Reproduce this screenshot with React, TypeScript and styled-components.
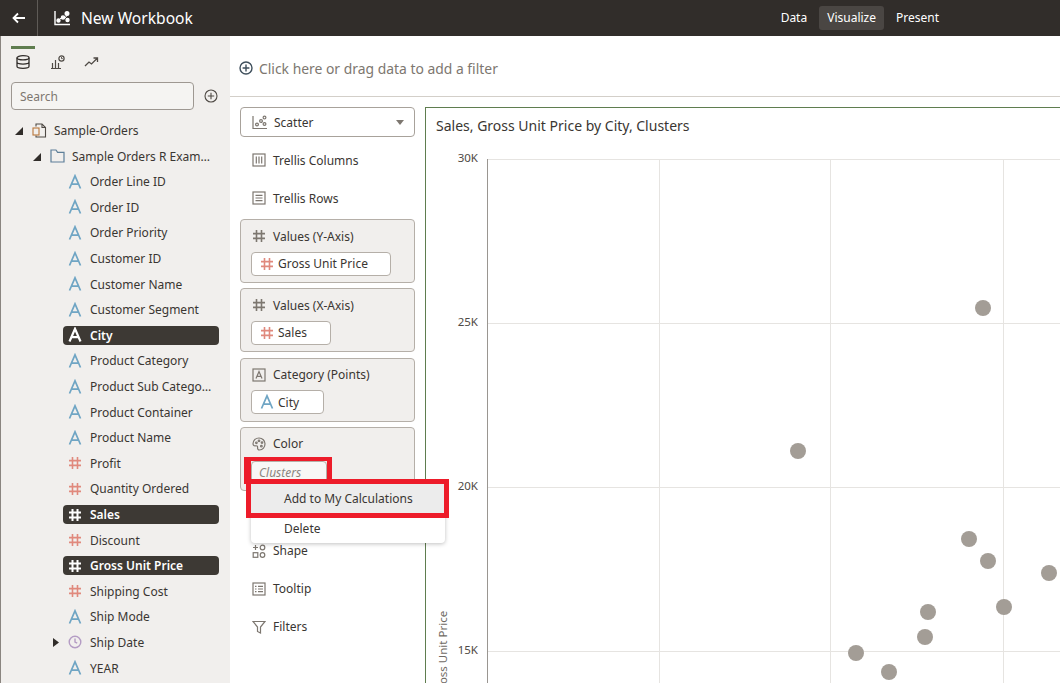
import { ReactNode } from 'react';
import styled, { createGlobalStyle } from 'styled-components';

const GlobalStyle = createGlobalStyle`
  html, body {
    margin: 0;
    padding: 0;
    height: 100%;
    overflow: hidden;
    background: #fff;
  }
  * { box-sizing: border-box; }
  body {
    font-family: 'Noto Sans', 'Open Sans', sans-serif;
    font-size: 12px;
    color: #3a3632;
  }
`;

const BLUE = '#6fa5c4';
const RED = '#e0897d';
const GREY = '#7d7770';

function LetterIcon({ color = BLUE, bold = false }: { color?: string; bold?: boolean }) {
  return (
    <svg width="14" height="16" viewBox="0 0 14 16" fill="none" stroke={color} strokeWidth={bold ? 2.2 : 1.7}>
      <path d="M1.5 14.5 7 1.8l5.5 12.7M3.4 10.2h7.2" />
    </svg>
  );
}

function HashIcon({ color = RED, bold = false }: { color?: string; bold?: boolean }) {
  return (
    <svg width="14" height="14" viewBox="0 0 14 14" fill="none" stroke={color} strokeWidth={bold ? 2 : 1.6}>
      <path d="M4.5 1v12M9.5 1v12M1 4.6h12M1 9.4h12" />
    </svg>
  );
}

function ClockIcon() {
  return (
    <svg width="14" height="14" viewBox="0 0 14 14" fill="none" stroke="#b49cc4" strokeWidth="1.4">
      <circle cx="7" cy="7" r="5.8" />
      <path d="M7 3.6V7l2.2 1.2" />
    </svg>
  );
}

function Caret({ open }: { open: boolean }) {
  return (
    <svg width="8" height="9" viewBox="0 0 8 9" fill="#312d2a">
      {open ? <path d="M8 1v8H0z" /> : <path d="M1 0l6 4.5L1 9z" />}
    </svg>
  );
}

const Header = styled.header`
  height: 36px;
  background: #312d2a;
  color: #fff;
  display: flex;
  align-items: center;
  flex-shrink: 0;
`;

const BackButton = styled.div`
  width: 38px;
  height: 36px;
  display: flex;
  align-items: center;
  justify-content: center;
  border-right: 1px solid #5f5b57;
`;

const WorkbookTitle = styled.div`
  display: flex;
  align-items: center;
  gap: 10px;
  padding-left: 16px;
  font-size: 15.6px;
  flex: 1;
`;

const ModeTabs = styled.nav`
  display: flex;
  align-items: center;
  gap: 4px;
  margin-right: 113px;
`;

const ModeTab = styled.div<{ $active?: boolean }>`
  height: 24px;
  line-height: 24px;
  padding: 0 8px;
  border-radius: 3px;
  background: ${p => (p.$active ? '#4a4643' : 'transparent')};
`;

const Body = styled.div`
  display: flex;
  height: 647px;
  overflow: hidden;
`;

const Sidebar = styled.aside`
  width: 230px;
  flex-shrink: 0;
  background: #f1efed;
  border-left: 1px solid #8a8580;
  overflow: hidden;
`;

const SideTabs = styled.div`
  display: flex;
  padding: 10px 0 0 10px;
`;

const SideTab = styled.div<{ $active?: boolean }>`
  width: 24px;
  height: 26px;
  margin-right: 10px;
  display: flex;
  align-items: flex-start;
  justify-content: center;
  padding-top: 6px;
  border-top: 3px solid ${p => (p.$active ? '#5f7d4f' : 'transparent')};
`;

const SearchRow = styled.div`
  display: flex;
  align-items: center;
  gap: 10px;
  padding: 10px 0 0 10px;
`;

const SearchBox = styled.div`
  width: 183px;
  height: 28px;
  background: #f5f4f2;
  border: 1px solid #9e9892;
  border-radius: 4px;
  padding: 1px 0 0 8px;
  line-height: 26px;
  color: #7d7770;
`;

const Tree = styled.ul`
  list-style: none;
  margin: 7.8px 0 0;
  padding: 0;
`;

const TreeRow = styled.li<{ $indent: number; $selected?: boolean }>`
  height: 25.6px;
  display: flex;
  align-items: center;
  margin-left: ${p => p.$indent}px;
  width: ${p => 218 - p.$indent}px;
  position: relative;
  color: ${p => (p.$selected ? '#fff' : '#3a3632')};
  font-weight: ${p => (p.$selected ? 600 : 400)};

  &::before {
    content: '';
    display: ${p => (p.$selected ? 'block' : 'none')};
    position: absolute;
    inset: 3px 0;
    background: #3d3934;
    border-radius: 4px;
  }
`;

const RowCaret = styled.span<{ $left: number }>`
  position: absolute;
  left: ${p => p.$left}px;
  display: flex;
`;

const RowIcon = styled.span`
  position: relative;
  width: 16px;
  margin: 0 4px;
  display: flex;
  justify-content: center;
`;

const RowLabel = styled.span`
  position: relative;
  white-space: nowrap;
  overflow: hidden;
  text-overflow: ellipsis;
  flex: 1;
  padding: 0 7px 0 3px;
`;

const Main = styled.main`
  flex: 1;
  min-width: 0;
  display: flex;
  flex-direction: column;
`;

const FilterBar = styled.div`
  height: 61px;
  flex-shrink: 0;
  border-bottom: 1px solid #d3cfc9;
  display: flex;
  align-items: center;
  gap: 6px;
  padding: 4px 0 0 9px;
  font-size: 13.9px;
  color: #7d7770;
`;

const Workspace = styled.div`
  flex: 1;
  display: flex;
  min-height: 0;
  padding-top: 10px;
`;

const ConfigPanel = styled.section`
  width: 195px;
  flex-shrink: 0;
  padding: 0 10px;
  position: relative;
`;

const ChartTypeSelect = styled.div`
  height: 30px;
  background: #fff;
  border: 1px solid #a8a29b;
  border-radius: 4px;
  display: flex;
  align-items: center;
  padding: 0 10px 0 11px;
  gap: 6px;
  margin-bottom: 4px;
`;

const SelectArrow = styled.span`
  margin-left: auto;
  width: 0;
  height: 0;
  border-left: 4px solid transparent;
  border-right: 4px solid transparent;
  border-top: 5px solid #7d7770;
`;

const GrammarRow = styled.div`
  height: 38px;
  display: flex;
  align-items: center;
  gap: 7px;
  padding-left: 12px;
`;

const Shelf = styled.div<{ $first?: boolean }>`
  height: 64px;
  background: #f1efed;
  border: 1px solid #b5afa8;
  border-radius: 4px;
  padding: 5px 10px 0;
  margin-top: ${p => (p.$first ? 2 : 5.33)}px;
`;

const ShelfTitle = styled.div`
  height: 22px;
  display: flex;
  align-items: center;
  gap: 7px;
  padding-left: 1px;
`;

const ShelfIcon = styled.span`
  width: 14px;
  display: flex;
  justify-content: center;
`;

const Pill = styled.div<{ $width: number; $ghost?: boolean }>`
  width: ${p => p.$width}px;
  height: 24px;
  margin-top: ${p => (p.$ghost ? 6 : 4.5)}px;
  background: ${p => (p.$ghost ? '#f8f7f6' : '#fff')};
  border: 1px solid #b5afa8;
  border-radius: 4px;
  display: flex;
  align-items: center;
  gap: 4px;
  padding-left: ${p => (p.$ghost ? 7 : 8)}px;
  color: ${p => (p.$ghost ? '#8c867f' : '#3a3632')};
  font-style: ${p => (p.$ghost ? 'italic' : 'normal')};
`;

const ShelfSpacer = styled.div`
  height: 41px;
`;

const ContextMenu = styled.div`
  position: absolute;
  left: 21px;
  top: 377px;
  width: 194px;
  height: 59px;
  background: #fff;
  border-radius: 0 0 4px 4px;
  box-shadow: 0 1px 4px rgba(0, 0, 0, 0.25);
  z-index: 2;
`;

const MenuItem = styled.div<{ $active?: boolean }>`
  height: 29.5px;
  line-height: 29.5px;
  padding-left: 33px;
  background: ${p => (p.$active ? '#ececec' : 'transparent')};
`;

const ClusterHighlight = styled.div`
  position: absolute;
  left: 14px;
  top: 350px;
  width: 88px;
  height: 27px;
  border: solid #ed1c2a;
  border-width: 4px 5px 0 7px;
  z-index: 3;
`;

const MenuHighlight = styled.div`
  position: absolute;
  left: 16px;
  top: 372px;
  width: 203px;
  height: 39px;
  border: 5px solid #ed1c2a;
  z-index: 3;
`;

const Canvas = styled.section`
  flex: 1;
  min-width: 0;
  border-top: 1px solid #5f7d4f;
  border-left: 1px solid #5f7d4f;
  display: flex;
  flex-direction: column;
  overflow: hidden;
`;

const ChartTitle = styled.h2`
  margin: 0;
  height: 37px;
  flex-shrink: 0;
  padding: 9px 0 0 10px;
  font-size: 14px;
  line-height: 18px;
  font-weight: 400;
  color: #3a3632;
`;

const ChartSvg = styled.svg`
  display: block;
  width: 634px;
  height: 538px;
  font-family: 'Noto Sans', 'Open Sans', sans-serif;
  font-size: 11.5px;
  fill: #4f4a45;
`;

type Field = { label: string; kind: 'text' | 'num' | 'date'; selected?: boolean; closed?: boolean };

const fields: Field[] = [
  { label: 'Order Line ID', kind: 'text' },
  { label: 'Order ID', kind: 'text' },
  { label: 'Order Priority', kind: 'text' },
  { label: 'Customer ID', kind: 'text' },
  { label: 'Customer Name', kind: 'text' },
  { label: 'Customer Segment', kind: 'text' },
  { label: 'City', kind: 'text', selected: true },
  { label: 'Product Category', kind: 'text' },
  { label: 'Product Sub Category', kind: 'text' },
  { label: 'Product Container', kind: 'text' },
  { label: 'Product Name', kind: 'text' },
  { label: 'Profit', kind: 'num' },
  { label: 'Quantity Ordered', kind: 'num' },
  { label: 'Sales', kind: 'num', selected: true },
  { label: 'Discount', kind: 'num' },
  { label: 'Gross Unit Price', kind: 'num', selected: true },
  { label: 'Shipping Cost', kind: 'num' },
  { label: 'Ship Mode', kind: 'text' },
  { label: 'Ship Date', kind: 'date', closed: true },
  { label: 'YEAR', kind: 'text' },
];

const points = [
  [983, 308], [798, 451], [969, 539], [988, 561], [1049, 573],
  [1004, 607], [928, 612], [925, 637], [856, 653], [889, 672],
];

const yTicks = [
  { y: 159, label: '30K' },
  { y: 323, label: '25K' },
  { y: 487, label: '20K' },
  { y: 651, label: '15K' },
];

function ScatterIcon({ color = GREY }: { color?: string }) {
  return (
    <svg width="16" height="15" viewBox="0 0 16 15" fill="none" stroke={color} strokeWidth="1.2">
      <path d="M1 1v12.5h14" />
      <circle cx="5" cy="9.5" r="1.4" />
      <circle cx="9" cy="6" r="1.4" />
      <circle cx="12.5" cy="2.6" r="1.4" />
      <circle cx="12.5" cy="9" r="1.4" />
    </svg>
  );
}

function FieldIcon({ field }: { field: Field }) {
  if (field.kind === 'date') return <ClockIcon />;
  const color = field.selected ? '#fff' : undefined;
  if (field.kind === 'num') return <HashIcon color={color} bold={field.selected} />;
  return <LetterIcon color={color} bold={field.selected} />;
}

function Grammar({ icon, children }: { icon: ReactNode; children: ReactNode }) {
  return (
    <GrammarRow>
      <ShelfIcon>{icon}</ShelfIcon>
      {children}
    </GrammarRow>
  );
}

export default function App() {
  return (
    <>
      <GlobalStyle />
      <Header>
        <BackButton>
          <svg width="14" height="12" viewBox="0 0 14 12" fill="none" stroke="#fff" strokeWidth="1.8">
            <path d="M13 6H2M6 1.5 1.5 6 6 10.5" />
          </svg>
        </BackButton>
        <WorkbookTitle>
          <svg width="17" height="16" viewBox="0 0 17 16" fill="none" stroke="#fff" strokeWidth="1.4">
            <path d="M1 1v13.5h15" />
            <path d="M4 11l4-4 3 1 3-4" strokeWidth="1" />
            <circle cx="4.5" cy="10.5" r="1.5" fill="#fff" />
            <circle cx="9" cy="7.5" r="1.6" fill="#fff" />
            <circle cx="13" cy="3.5" r="1.8" fill="#fff" />
            <circle cx="13.5" cy="10" r="1.5" fill="#fff" />
          </svg>
          New Workbook
        </WorkbookTitle>
        <ModeTabs>
          <ModeTab>Data</ModeTab>
          <ModeTab $active>Visualize</ModeTab>
          <ModeTab>Present</ModeTab>
        </ModeTabs>
      </Header>
      <Body>
        <Sidebar>
          <SideTabs>
            <SideTab $active>
              <svg width="14" height="14" viewBox="0 0 14 14" fill="none" stroke="#312d2a" strokeWidth="1.3">
                <ellipse cx="7" cy="2.8" rx="6" ry="2.1" />
                <path d="M1 2.8v8.4c0 1.2 2.7 2.1 6 2.1s6-.9 6-2.1V2.8M1 7c0 1.2 2.7 2.1 6 2.1s6-.9 6-2.1" />
              </svg>
            </SideTab>
            <SideTab>
              <svg width="15" height="14" viewBox="0 0 15 14" fill="none" stroke="#4f4a45" strokeWidth="1.2">
                <path d="M1 13.5h10M2.5 13V8M5.5 13V5M8.5 13V8" />
                <circle cx="11.5" cy="3.5" r="2.6" />
                <path d="M11.5 2v1.6h1.3" strokeWidth="0.9" />
              </svg>
            </SideTab>
            <SideTab>
              <svg width="15" height="14" viewBox="0 0 15 14" fill="none" stroke="#4f4a45" strokeWidth="1.3">
                <path d="M1 11l4-4 2.5 2L13 3.5M9.5 3H13.5V7" />
              </svg>
            </SideTab>
          </SideTabs>
          <SearchRow>
            <SearchBox>Search</SearchBox>
            <svg width="14" height="14" viewBox="0 0 14 14" fill="none" stroke="#4f4a45" strokeWidth="1.1">
              <circle cx="7" cy="7" r="6" />
              <path d="M7 3.8v6.4M3.8 7h6.4" />
            </svg>
          </SearchRow>
          <Tree>
            <TreeRow $indent={26}>
              <RowCaret $left={-12}><Caret open /></RowCaret>
              <RowIcon>
                <svg width="15" height="15" viewBox="0 0 15 15" fill="none" stroke="#4f4a45" strokeWidth="1.1">
                  <path d="M4 3.5V1h6l3.5 3.5V14H4v-1.5" />
                  <path d="M10 1v3.5h3.5" />
                  <rect x="1" y="5" width="6" height="7" stroke="#b8763a" />
                </svg>
              </RowIcon>
              <RowLabel>Sample-Orders</RowLabel>
            </TreeRow>
            <TreeRow $indent={44}>
              <RowCaret $left={-12}><Caret open /></RowCaret>
              <RowIcon>
                <svg width="15" height="14" viewBox="0 0 15 14" fill="none" stroke="#5e7f99" strokeWidth="1.2">
                  <path d="M1 13V1h5l1.6 2.4H14V13z" />
                </svg>
              </RowIcon>
              <RowLabel>Sample Orders R Example</RowLabel>
            </TreeRow>
            {fields.map(field => (
              <TreeRow key={field.label} $indent={62} $selected={field.selected}>
                {field.closed && <RowCaret $left={-11}><Caret open={false} /></RowCaret>}
                <RowIcon><FieldIcon field={field} /></RowIcon>
                <RowLabel>{field.label}</RowLabel>
              </TreeRow>
            ))}
          </Tree>
        </Sidebar>
        <Main>
          <FilterBar>
            <svg width="14" height="14" viewBox="0 0 14 14" fill="none" stroke="#3f4f5c" strokeWidth="1.4">
              <circle cx="7" cy="7" r="6" />
              <path d="M7 3.6v6.8M3.6 7h6.8" />
            </svg>
            Click here or drag data to add a filter
          </FilterBar>
          <Workspace>
            <ConfigPanel>
              <ChartTypeSelect>
                <ScatterIcon />
                Scatter
                <SelectArrow />
              </ChartTypeSelect>
              <Grammar
                icon={
                  <svg width="14" height="14" viewBox="0 0 14 14" fill="none" stroke={GREY} strokeWidth="1.2">
                    <rect x="1" y="1" width="12" height="12" />
                    <path d="M4.3 3.5v7M7 3.5v7M9.7 3.5v7" />
                  </svg>
                }
              >
                Trellis Columns
              </Grammar>
              <Grammar
                icon={
                  <svg width="14" height="14" viewBox="0 0 14 14" fill="none" stroke={GREY} strokeWidth="1.2">
                    <rect x="1" y="1" width="12" height="12" />
                    <path d="M3.5 4.3h7M3.5 7h7M3.5 9.7h7" />
                  </svg>
                }
              >
                Trellis Rows
              </Grammar>
              <Shelf $first>
                <ShelfTitle>
                  <ShelfIcon><HashIcon color={GREY} /></ShelfIcon>
                  Values (Y-Axis)
                </ShelfTitle>
                <Pill $width={140}>
                  <HashIcon />
                  Gross Unit Price
                </Pill>
              </Shelf>
              <Shelf>
                <ShelfTitle>
                  <ShelfIcon><HashIcon color={GREY} /></ShelfIcon>
                  Values (X-Axis)
                </ShelfTitle>
                <Pill $width={80}>
                  <HashIcon />
                  Sales
                </Pill>
              </Shelf>
              <Shelf>
                <ShelfTitle>
                  <ShelfIcon>
                    <svg width="14" height="14" viewBox="0 0 14 14" fill="none" stroke={GREY} strokeWidth="1.2">
                      <rect x="1" y="1" width="12" height="12" />
                      <path d="M4 10.5 7 3.5l3 7M5 8.4h4" />
                    </svg>
                  </ShelfIcon>
                  Category (Points)
                </ShelfTitle>
                <Pill $width={73}>
                  <LetterIcon />
                  City
                </Pill>
              </Shelf>
              <Shelf>
                <ShelfTitle>
                  <ShelfIcon>
                    <svg width="14" height="14" viewBox="0 0 14 14" fill="none" stroke={GREY} strokeWidth="1.2">
                      <path d="M7 1C3.5 1 1 3.5 1 6.8c0 1.6 1.2 2.2 2.4 2 1.5-.2 2.4.4 2.2 1.7-.2 1.5.6 2.5 1.9 2.5C10.8 13 13 10.2 13 6.8 13 3.6 10.5 1 7 1z" />
                      <circle cx="4.4" cy="5.8" r=".8" />
                      <circle cx="7" cy="3.8" r=".8" />
                      <circle cx="10" cy="5.6" r=".8" />
                      <circle cx="9.4" cy="9.2" r=".8" />
                    </svg>
                  </ShelfIcon>
                  Color
                </ShelfTitle>
                <Pill $width={76} $ghost>Clusters</Pill>
              </Shelf>
              <ShelfSpacer />
              <Grammar
                icon={
                  <svg width="14" height="14" viewBox="0 0 14 14" fill="none" stroke={GREY} strokeWidth="1.2">
                    <path d="M3.5 1v5M1 3.5h5" />
                    <circle cx="10.5" cy="3.5" r="2.3" />
                    <rect x="1.2" y="8.7" width="4.6" height="4.6" />
                    <circle cx="10.5" cy="11" r="2.3" />
                  </svg>
                }
              >
                Shape
              </Grammar>
              <Grammar
                icon={
                  <svg width="14" height="14" viewBox="0 0 14 14" fill="none" stroke={GREY} strokeWidth="1.2">
                    <rect x="1" y="1" width="12" height="12" />
                    <path d="M3 4.3h1.5M3 7h1.5M3 9.7h1.5M6 4.3h5M6 7h5M6 9.7h5" />
                  </svg>
                }
              >
                Tooltip
              </Grammar>
              <Grammar
                icon={
                  <svg width="14" height="14" viewBox="0 0 14 14" fill="none" stroke={GREY} strokeWidth="1.2">
                    <path d="M1 1.5h12L8.5 7v6l-3-1.5V7z" />
                  </svg>
                }
              >
                Filters
              </Grammar>
              <ContextMenu>
                <MenuItem $active>Add to My Calculations</MenuItem>
                <MenuItem>Delete</MenuItem>
              </ContextMenu>
              <ClusterHighlight />
              <MenuHighlight />
            </ConfigPanel>
            <Canvas>
              <ChartTitle>Sales, Gross Unit Price by City, Clusters</ChartTitle>
              <ChartSvg viewBox="426 145 634 538">
                {yTicks.map(t => (
                  <g key={t.label}>
                    <line x1="487" x2="1060" y1={t.y + 0.5} y2={t.y + 0.5} stroke="#e6e4e1" />
                    <text x="478" y={t.y + 3} textAnchor="end">{t.label}</text>
                  </g>
                ))}
                {[659, 830, 1003].map(x => (
                  <line key={x} x1={x + 0.5} x2={x + 0.5} y1="159" y2="683" stroke="#e6e4e1" />
                ))}
                <line x1="487.5" x2="487.5" y1="159" y2="683" stroke="#9a9691" />
                <text transform="translate(447 697) rotate(-90)" fill="#6f6a64">Gross Unit Price</text>
                {points.map(([x, y]) => (
                  <circle key={`${x}-${y}`} cx={x} cy={y} r="8" fill="#a39d96" />
                ))}
              </ChartSvg>
            </Canvas>
          </Workspace>
        </Main>
      </Body>
    </>
  );
}
